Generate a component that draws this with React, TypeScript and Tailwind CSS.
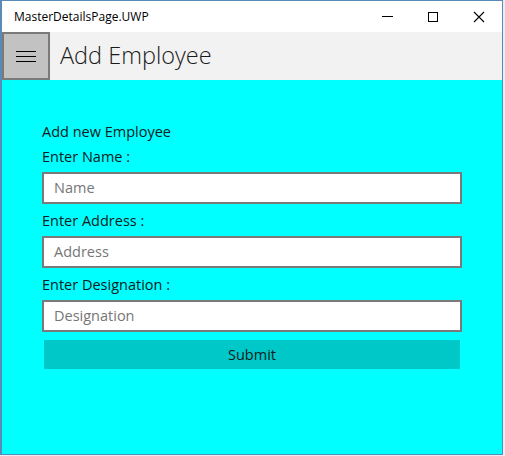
import React from "react";

const font = { fontFamily: "'Open Sans', 'Noto Sans', sans-serif" };

function Field({ label, placeholder }: { label: string; placeholder: string }) {
  return (
    <>
      <div className="mt-[7px] h-[20px] text-[14.5px] leading-[20px] text-[#102020]">{label}</div>
      <div className="mt-[5px] flex h-[32px] w-[420px] items-center border-2 border-[#7a7a7a] bg-white px-[10px] text-[14.5px] text-[#767676]">
        {placeholder}
      </div>
    </>
  );
}

export default function App() {
  return (
    <div className="h-[456px] w-[505px] bg-[#e8eef4]" style={font}>
      <div className="flex h-[455px] w-[503px] flex-col border border-l-2 border-[#5a8ab8] bg-white">
        {/* title bar */}
        <div className="flex h-[31px] items-center">
          <span className="ml-[12px] text-[12px] text-black">MasterDetailsPage.UWP</span>
          <div className="ml-auto flex h-full">
            <div className="flex w-[46px] items-center justify-center">
              <div className="h-px w-[11px] bg-black" />
            </div>
            <div className="flex w-[46px] items-center justify-center">
              <div className="h-[10px] w-[10px] border border-black" />
            </div>
            <div className="flex w-[46px] items-center justify-center">
              <svg width="12" height="12" viewBox="0 0 12 12">
                <path d="M1 1 L11 11 M11 1 L1 11" stroke="#000" strokeWidth="1.1" />
              </svg>
            </div>
          </div>
        </div>
        {/* header */}
        <div className="flex h-[48px] items-center bg-[#f2f2f2]">
          <div className="flex h-[48px] w-[48px] flex-col items-center justify-center gap-[4px] border-2 border-[#7a7a7a] bg-[#c2c2c2]">
            <div className="h-px w-[20px] bg-black" />
            <div className="h-px w-[20px] bg-black" />
            <div className="h-px w-[20px] bg-black" />
          </div>
          <span className="ml-[10px] text-[23.5px] font-light text-[#1a1a1a]">Add Employee</span>
        </div>
        {/* content */}
        <div className="flex flex-1 flex-col bg-[#00ffff] pl-[40px] pt-[41px]">
          <div className="h-[22px] text-[14.5px] leading-[22px] text-[#102020]">Add new Employee</div>
          <div className="mt-[4px] h-[20px] text-[14.5px] leading-[20px] text-[#102020]">Enter Name :</div>
          <div className="mt-[5px] flex h-[32px] w-[420px] items-center border-2 border-[#7a7a7a] bg-white px-[10px] text-[14.5px] text-[#767676]">
            Name
          </div>
          <Field label="Enter Address :" placeholder="Address" />
          <Field label="Enter Designation :" placeholder="Designation" />
          <button className="ml-[2px] mt-[8px] h-[29px] w-[416px] bg-[#00c8c8] text-[14.5px] text-[#102020]">
            Submit
          </button>
        </div>
      </div>
    </div>
  );
}
